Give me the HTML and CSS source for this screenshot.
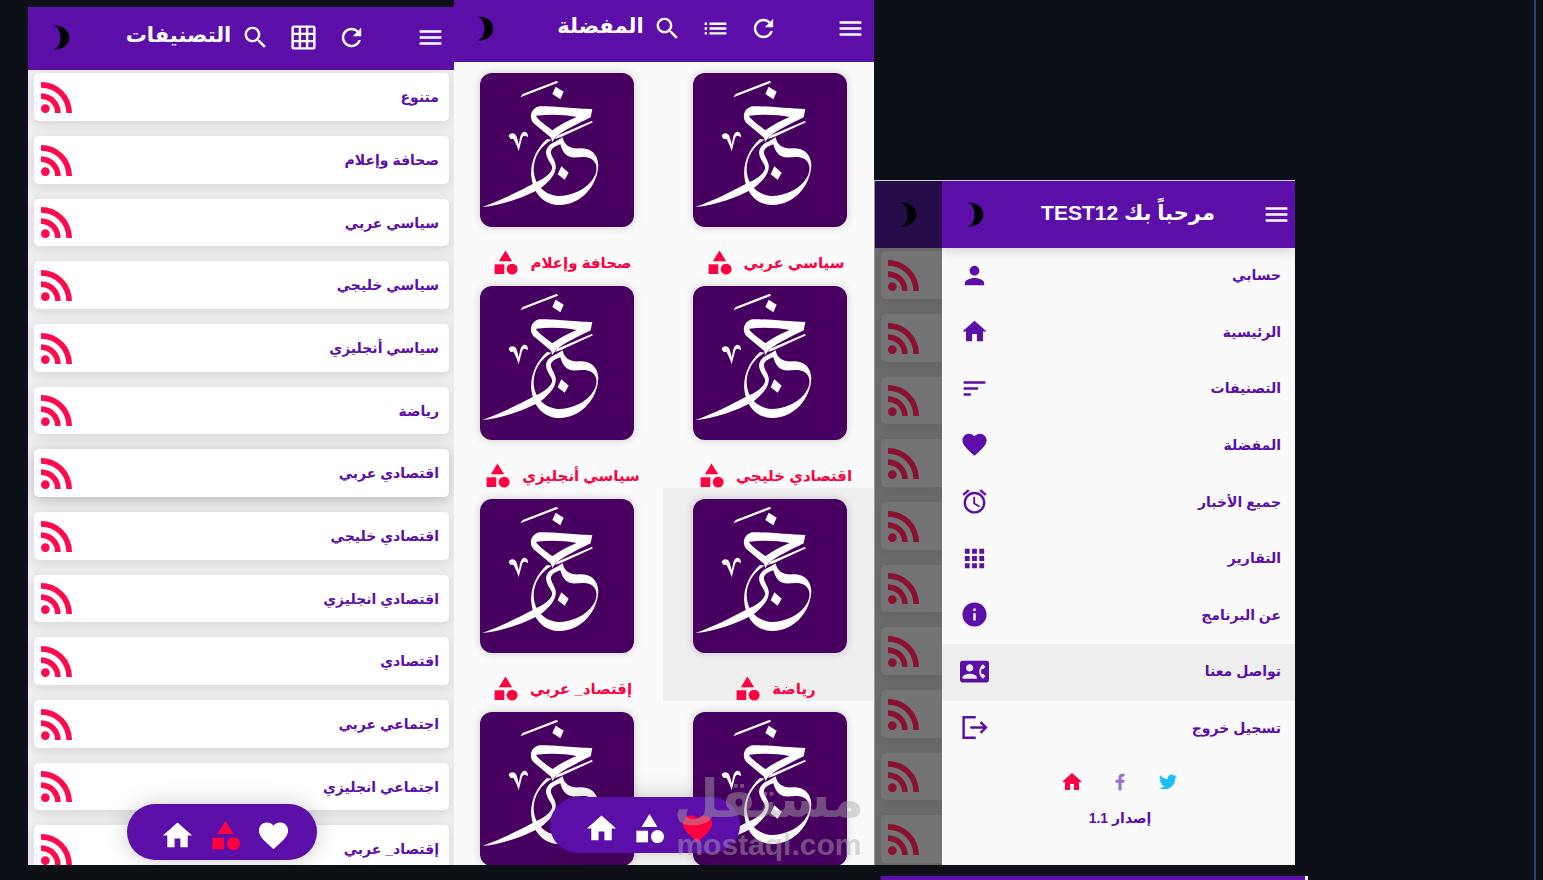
FILE: index.html
```
<!DOCTYPE html>
<html lang="ar" dir="rtl">
<head>
<meta charset="UTF-8">
<meta name="viewport" content="width=device-width, initial-scale=1.0">
<title>خبر</title>
<link rel="stylesheet" href="styles.css">
</head>
<body>

<!-- icons -->
<svg class="sprite" aria-hidden="true">
  <symbol id="i-menu" viewBox="0 0 24 24"><path d="M3 18h18v-2H3v2zm0-5h18v-2H3v2zm0-7v2h18V6H3z"/></symbol>
  <symbol id="i-refresh" viewBox="0 0 24 24"><path d="M17.65 6.35C16.2 4.9 14.21 4 12 4c-4.42 0-7.99 3.58-7.99 8s3.57 8 7.99 8c3.73 0 6.84-2.55 7.73-6h-2.08c-.82 2.33-3.04 4-5.65 4-3.31 0-6-2.69-6-6s2.69-6 6-6c1.66 0 3.14.69 4.22 1.78L13 11h7V4l-2.35 2.35z"/></symbol>
  <symbol id="i-search" viewBox="0 0 24 24"><path d="M15.5 14h-.79l-.28-.27C15.41 12.59 16 11.11 16 9.5 16 5.91 13.09 3 9.5 3S3 5.91 3 9.5 5.91 16 9.5 16c1.61 0 3.09-.59 4.23-1.57l.27.28v.79l5 4.99L20.49 19l-4.99-5zm-6 0C7.01 14 5 11.99 5 9.5S7.01 5 9.5 5 14 7.01 14 9.5 11.99 14 9.5 14z"/></symbol>
  <symbol id="i-grid" viewBox="0 0 24 24"><path d="M20 2H4c-1.1 0-2 .9-2 2v16c0 1.1.9 2 2 2h16c1.1 0 2-.9 2-2V4c0-1.1-.9-2-2-2zM8 20H4v-4h4v4zm0-6H4v-4h4v4zm0-6H4V4h4v4zm6 12h-4v-4h4v4zm0-6h-4v-4h4v4zm0-6h-4V4h4v4zm6 12h-4v-4h4v4zm0-6h-4v-4h4v4zm0-6h-4V4h4v4z"/></symbol>
  <symbol id="i-list" viewBox="0 0 24 24"><path d="M3 13h2v-2H3v2zm0 4h2v-2H3v2zm0-8h2V7H3v2zm4 4h14v-2H7v2zm0 4h14v-2H7v2zM7 7v2h14V7H7z"/></symbol>
  <symbol id="i-moon" viewBox="0 0 24 24"><path d="M4 .5c9-.5 15.500 4.500 15.500 11.500S13 24 4.500 23.500c5-2 6.500-6.500 6.500-11.500S9 2 4 .5z"/></symbol>
  <symbol id="i-rss" viewBox="4 4.440 15.560 15.560"><path d="M6.180 15.640a2.180 2.180 0 1 1 0 4.360 2.180 2.180 0 0 1 0-4.360M4 4.440A15.560 15.560 0 0 1 19.560 20h-2.830A12.730 12.730 0 0 0 4 7.270V4.440m0 5.660a9.900 9.900 0 0 1 9.900 9.900h-2.830A7.070 7.070 0 0 0 4 12.930V10.100z"/></symbol>
  <symbol id="i-category" viewBox="0 0 24 24"><path d="M12 2l-5.500 9h11z"/><circle cx="17.500" cy="17.500" r="4.500"/><path d="M3 13.500h8v8H3z"/></symbol>
  <symbol id="i-heart" viewBox="0 0 24 24"><path d="M12 21.350l-1.450-1.320C5.400 15.360 2 12.280 2 8.500 2 5.420 4.420 3 7.500 3c1.740 0 3.410.81 4.500 2.090C13.090 3.810 14.760 3 16.500 3 19.580 3 22 5.420 22 8.500c0 3.780-3.400 6.860-8.550 11.540L12 21.350z"/></symbol>
  <symbol id="i-home" viewBox="0 0 24 24"><path d="M10 20v-6h4v6h5v-8h3L12 3 2 12h3v8z"/></symbol>
  <symbol id="i-person" viewBox="0 0 24 24"><path d="M12 12c2.210 0 4-1.790 4-4s-1.790-4-4-4-4 1.790-4 4 1.790 4 4 4zm0 2c-2.670 0-8 1.340-8 4v2h16v-2c0-2.660-5.330-4-8-4z"/></symbol>
  <symbol id="i-sort" viewBox="0 0 24 24"><path d="M3 18h6v-2H3v2zM3 6v2h18V6H3zm0 7h12v-2H3v2z"/></symbol>
  <symbol id="i-alarm" viewBox="0 0 24 24"><path d="M22 5.720l-4.600-3.860-1.290 1.530 4.600 3.860L22 5.720zM7.880 3.390L6.600 1.860 2 5.710l1.290 1.530 4.590-3.850zM12.500 8H11v6l4.750 2.850.75-1.230-4-2.370V8zM12 4c-4.970 0-9 4.030-9 9s4.020 9 9 9c4.970 0 9-4.030 9-9s-4.030-9-9-9zm0 16c-3.870 0-7-3.130-7-7s3.130-7 7-7 7 3.130 7 7-3.130 7-7 7z"/></symbol>
  <symbol id="i-apps" viewBox="0 0 24 24"><path d="M4 8h4V4H4v4zm6 12h4v-4h-4v4zm-6 0h4v-4H4v4zm0-6h4v-4H4v4zm6 0h4v-4h-4v4zm6-10v4h4V4h-4zm-6 4h4V4h-4v4zm6 6h4v-4h-4v4zm0 6h4v-4h-4v4z"/></symbol>
  <symbol id="i-info" viewBox="0 0 24 24"><path d="M12 2C6.480 2 2 6.480 2 12s4.480 10 10 10 10-4.480 10-10S17.520 2 12 2zm1 15h-2v-6h2v6zm0-8h-2V7h2v2z"/></symbol>
  <symbol id="i-contact" viewBox="0 0 24 24"><path d="M22 3H2C.9 3 0 3.900 0 5v14c0 1.100.9 2 2 2h20c1.100 0 1.990-.9 1.990-2L24 5c0-1.100-.9-2-2-2zM8 6c1.660 0 3 1.340 3 3s-1.340 3-3 3-3-1.340-3-3 1.340-3 3-3zm6 12H2v-1c0-2 4-3.100 6-3.100s6 1.100 6 3.100v1zm3.850-4h1.640L21 16l-1.990 1.990c-1.310-.98-2.280-2.380-2.730-3.990-.18-.64-.28-1.310-.28-2s.1-1.360.28-2c.45-1.620 1.420-3.010 2.730-3.990L21 8l-1.510 2h-1.640c-.22.63-.35 1.300-.35 2s.13 1.370.35 2z"/></symbol>
  <symbol id="i-logout" viewBox="0 0 24 24"><path d="M13 3.500H3v17h10M8.500 12H21M17 7.500l4.500 4.500-4.500 4.500" fill="none" stroke="currentColor" stroke-width="2"/></symbol>
  <symbol id="i-facebook" viewBox="0 0 24 24"><path d="M10 23V13H6V9h4V6.500C10 3 12 1 15.200 1c1.500 0 2.800.1 2.800.1v3.700h-1.800C14.500 4.800 14 5.800 14 7v2h4l-.6 4H14v10z"/></symbol>
  <symbol id="i-twitter" viewBox="0 0 24 24"><path d="M23.950 4.570a10 10 0 0 1-2.820.77 4.960 4.960 0 0 0 2.160-2.720c-.95.550-2 .95-3.130 1.180a4.920 4.920 0 0 0-8.380 4.480C7.690 8.090 4.070 6.130 1.640 3.160a4.920 4.920 0 0 0 1.520 6.570 4.900 4.900 0 0 1-2.230-.61v.06c0 2.380 1.690 4.370 3.950 4.820a5 5 0 0 1-2.210.08 4.940 4.940 0 0 0 4.600 3.420A9.870 9.870 0 0 1 0 19.540a14 14 0 0 0 7.550 2.210c9.050 0 14-7.500 14-13.980 0-.21 0-.42-.02-.63a9.940 9.940 0 0 0 2.460-2.550z"/></symbol>
  <!-- channel logo -->
  <symbol id="i-logo" viewBox="15 24 462 462">
    <path d="M136 97L143 87 246 47 249 53Z"/>
    <path d="M242 65L266 80 256 103 232 87Z"/>
    <path fill-rule="evenodd" d="M352 132L347 157C308 176 268 196 243 215L232 231 228 218 176 175C162 161 164 132 192 124C210 121 300 130 352 132ZM184 152C178 155 228 194 233 195C255 179 280 166 305 156C270 149 225 147 184 152Z"/>
    <path d="M246 212L350 168 354 172 258 216 240 222Z"/>
    <path d="M216 222C182 252 165 296 169 335C175 385 205 419 253 420C320 420 368 360 370 300C368 265 345 249 315 250C285 252 268 242 263 217L243 229C215 240 210 258 215 273C222 293 234 300 231 312C225 330 200 345 180 353C130 380 80 405 22 426C80 421 150 396 195 371C230 345 245 320 242 300C240 285 225 270 228 258C232 247 245 242 256 238C262 262 275 275 290 277C310 278 330 273 345 280C366 290 370 312 357 337C335 375 290 393 250 393C205 390 175 355 176 310C178 275 195 245 230 224Z"/>
    <path d="M259 304L281 323 269 344 248 328Z"/>
    <path d="M101 213C104 202 118 202 123 211C127 219 129 230 131 238C135 222 135 204 147 200C156 199 161 210 158 217L153 213C146 211 143 214 141 220L131 259C127 244 122 235 117 224C112 217 109 225 105 220Z"/>
  </symbol>
</svg>

<div class="board">
  <main class="screens">

    <!-- categories list -->
    <section class="screen screen-list">
      <header class="bar">
        <button class="icon-btn" aria-label="القائمة"><svg class="icon"><use href="#i-menu"/></svg></button>
        <div class="bar-group">
          <button class="icon-btn" aria-label="تحديث"><svg class="icon"><use href="#i-refresh"/></svg></button>
          <button class="icon-btn" aria-label="شبكة"><svg class="icon"><use href="#i-grid"/></svg></button>
          <button class="icon-btn" aria-label="بحث"><svg class="icon"><use href="#i-search"/></svg></button>
          <h1 class="title">التصنيفات</h1>
        </div>
        <button class="icon-btn moon" aria-label="الوضع الليلي"><svg class="icon"><use href="#i-moon"/></svg></button>
      </header>
      <div class="list">
        <a class="card" href="#">متنوع<svg class="rss"><use href="#i-rss"/></svg></a>
        <a class="card" href="#">صحافة وإعلام<svg class="rss"><use href="#i-rss"/></svg></a>
        <a class="card" href="#">سياسي عربي<svg class="rss"><use href="#i-rss"/></svg></a>
        <a class="card" href="#">سياسي خليجي<svg class="rss"><use href="#i-rss"/></svg></a>
        <a class="card" href="#">سياسي أنجليزي<svg class="rss"><use href="#i-rss"/></svg></a>
        <a class="card" href="#">رياضة<svg class="rss"><use href="#i-rss"/></svg></a>
        <a class="card card-active" href="#">اقتصادي عربي<svg class="rss"><use href="#i-rss"/></svg></a>
        <a class="card" href="#">اقتصادي خليجي<svg class="rss"><use href="#i-rss"/></svg></a>
        <a class="card" href="#">اقتصادي انجليزي<svg class="rss"><use href="#i-rss"/></svg></a>
        <a class="card" href="#">اقتصادي<svg class="rss"><use href="#i-rss"/></svg></a>
        <a class="card" href="#">اجتماعي عربي<svg class="rss"><use href="#i-rss"/></svg></a>
        <a class="card" href="#">اجتماعي انجليزي<svg class="rss"><use href="#i-rss"/></svg></a>
        <a class="card" href="#">إقتصاد_ عربي<svg class="rss"><use href="#i-rss"/></svg></a>
      </div>
      <nav class="pill">
        <a href="#" aria-label="المفضلة"><svg class="icon"><use href="#i-heart"/></svg></a>
        <a class="on" href="#" aria-label="التصنيفات"><svg class="icon"><use href="#i-category"/></svg></a>
        <a href="#" aria-label="الرئيسية"><svg class="icon"><use href="#i-home"/></svg></a>
      </nav>
    </section>

    <!-- favourites grid -->
    <section class="screen screen-grid">
      <header class="bar">
        <button class="icon-btn" aria-label="القائمة"><svg class="icon"><use href="#i-menu"/></svg></button>
        <div class="bar-group">
          <button class="icon-btn" aria-label="تحديث"><svg class="icon"><use href="#i-refresh"/></svg></button>
          <button class="icon-btn" aria-label="قائمة"><svg class="icon"><use href="#i-list"/></svg></button>
          <button class="icon-btn" aria-label="بحث"><svg class="icon"><use href="#i-search"/></svg></button>
          <h1 class="title">المفضلة</h1>
        </div>
        <button class="icon-btn moon" aria-label="الوضع الليلي"><svg class="icon"><use href="#i-moon"/></svg></button>
      </header>
      <div class="tiles">
        <a class="tile" href="#"><svg class="logo"><use href="#i-logo"/></svg><span class="tile-name">سياسي عربي<svg class="icon"><use href="#i-category"/></svg></span></a>
        <a class="tile" href="#"><svg class="logo"><use href="#i-logo"/></svg><span class="tile-name">صحافة وإعلام<svg class="icon"><use href="#i-category"/></svg></span></a>
        <a class="tile" href="#"><svg class="logo"><use href="#i-logo"/></svg><span class="tile-name">اقتصادي خليجي<svg class="icon"><use href="#i-category"/></svg></span></a>
        <a class="tile" href="#"><svg class="logo"><use href="#i-logo"/></svg><span class="tile-name">سياسي أنجليزي<svg class="icon"><use href="#i-category"/></svg></span></a>
        <a class="tile tile-active" href="#"><svg class="logo"><use href="#i-logo"/></svg><span class="tile-name">رياضة<svg class="icon"><use href="#i-category"/></svg></span></a>
        <a class="tile" href="#"><svg class="logo"><use href="#i-logo"/></svg><span class="tile-name">إقتصاد_ عربي<svg class="icon"><use href="#i-category"/></svg></span></a>
        <a class="tile" href="#" aria-label="خبر"><svg class="logo"><use href="#i-logo"/></svg></a>
        <a class="tile" href="#" aria-label="خبر"><svg class="logo"><use href="#i-logo"/></svg></a>
      </div>
      <nav class="pill">
        <a class="on" href="#" aria-label="المفضلة"><svg class="icon"><use href="#i-heart"/></svg></a>
        <a href="#" aria-label="التصنيفات"><svg class="icon"><use href="#i-category"/></svg></a>
        <a href="#" aria-label="الرئيسية"><svg class="icon"><use href="#i-home"/></svg></a>
      </nav>
      <div class="watermark">
        <span class="watermark-ar">مستقل</span>
        <span class="watermark-en">mostaql.com</span>
      </div>
    </section>

    <!-- side menu -->
    <section class="screen screen-menu">
      <div class="drawer">
        <header class="bar">
          <button class="icon-btn" aria-label="القائمة"><svg class="icon"><use href="#i-menu"/></svg></button>
          <h1 class="title">مرحباً بك TEST12</h1>
          <button class="icon-btn moon" aria-label="الوضع الليلي"><svg class="icon"><use href="#i-moon"/></svg></button>
        </header>
        <nav class="menu">
          <a href="#">حسابي<svg class="icon"><use href="#i-person"/></svg></a>
          <a href="#">الرئيسية<svg class="icon"><use href="#i-home"/></svg></a>
          <a href="#">التصنيفات<svg class="icon"><use href="#i-sort"/></svg></a>
          <a href="#">المفضلة<svg class="icon"><use href="#i-heart"/></svg></a>
          <a href="#">جميع الأخبار<svg class="icon"><use href="#i-alarm"/></svg></a>
          <a href="#">التقارير<svg class="icon"><use href="#i-apps"/></svg></a>
          <a href="#">عن البرنامج<svg class="icon"><use href="#i-info"/></svg></a>
          <a class="menu-active" href="#">تواصل معنا<svg class="icon"><use href="#i-contact"/></svg></a>
          <a href="#">تسجيل خروج<svg class="icon"><use href="#i-logout"/></svg></a>
        </nav>
        <footer class="drawer-footer">
          <div class="social">
            <a class="tw" href="#" aria-label="تويتر"><svg><use href="#i-twitter"/></svg></a>
            <a class="fb" href="#" aria-label="فيسبوك"><svg><use href="#i-facebook"/></svg></a>
            <a class="site" href="#" aria-label="الموقع"><svg class="wide"><use href="#i-home"/></svg></a>
          </div>
          <p class="version">إصدار 1.1</p>
        </footer>
      </div>
      <div class="behind" aria-hidden="true">
        <div class="bar"><span class="icon-btn moon"><svg class="icon"><use href="#i-moon"/></svg></span></div>
        <div class="list">
          <div class="card"><svg class="rss"><use href="#i-rss"/></svg></div>
          <div class="card"><svg class="rss"><use href="#i-rss"/></svg></div>
          <div class="card"><svg class="rss"><use href="#i-rss"/></svg></div>
          <div class="card"><svg class="rss"><use href="#i-rss"/></svg></div>
          <div class="card"><svg class="rss"><use href="#i-rss"/></svg></div>
          <div class="card"><svg class="rss"><use href="#i-rss"/></svg></div>
          <div class="card"><svg class="rss"><use href="#i-rss"/></svg></div>
          <div class="card"><svg class="rss"><use href="#i-rss"/></svg></div>
          <div class="card"><svg class="rss"><use href="#i-rss"/></svg></div>
          <div class="card"><svg class="rss"><use href="#i-rss"/></svg></div>
        </div>
      </div>
    </section>

  </main>
  <div class="next-row"><div class="next-screen"></div></div>
</div>

</body>
</html>
```
FILE: styles.css
```
* {
  box-sizing: border-box;
}

body {
  margin: 0;
  background-color: #0d1017;
  color: #5b0fa8;
  font-family: "Liberation Sans", "DejaVu Sans", sans-serif;
  font-weight: bold;
}

a {
  color: inherit;
  text-decoration: none;
}

svg {
  display: block;
  flex: none;
  fill: currentColor;
}

.sprite {
  position: absolute;
  width: 0;
  height: 0;
}

.icon {
  width: 29px;
  height: 29px;
}

/* board */
.board {
  direction: ltr;
  display: flex;
  flex-direction: column;
  height: 100vh;
  margin-right: 7px;
  padding-left: 28px;
  border-right: 2px solid #243f7a;
  overflow: hidden;
}

.screens,
.next-row {
  display: grid;
  grid-template-columns: 426fr 420fr 421fr 239fr;
}

.screens {
  flex: 1;
  min-height: 0;
  grid-template-rows: 100%;
}

.screen {
  direction: rtl;
  position: relative;
  display: flex;
  flex-direction: column;
  overflow: hidden;
  background-color: #fafafa;
}

.screen-list {
  margin-top: 7px;
}

/* next row of screens */
.next-row {
  height: 15px;
  padding-top: 11px;
}

.next-screen {
  grid-column: 3;
  background-color: #5b0fa8;
  border-right: 3px solid #fff;
  margin-left: 7px;
  margin-right: -13px;
}

/* top bar */
.bar {
  flex: none;
  display: flex;
  justify-content: space-between;
  align-items: center;
  height: 63px;
  padding-left: 9px;
  padding-bottom: 3px;
  background-color: #5b0fa8;
  color: #fff;
}

.bar-group {
  display: flex;
  align-items: center;
  padding-left: 10px;
}

.icon-btn {
  display: flex;
  justify-content: center;
  align-items: center;
  width: 48px;
  height: 48px;
  padding: 0;
  border: none;
  background: none;
  color: inherit;
  cursor: pointer;
}

.moon {
  color: #000;
}

.moon .icon {
  width: 25px;
  height: 25px;
}

.title {
  margin: 0;
  padding-bottom: 4px;
  font-size: 21px;
  line-height: 32px;
  white-space: nowrap;
}

/* list */
.list {
  flex: 1;
  min-height: 0;
  display: grid;
  grid-auto-rows: 63px 63px 62px;
  padding: 3px 5px 0 6px;
  background-color: #eee;
}

.card {
  display: flex;
  justify-content: space-between;
  align-items: center;
  margin-bottom: 15px;
  padding: 0 10px 0 7px;
  border-radius: 5px;
  background-color: #fff;
  box-shadow: 0 3px 12px rgba(0, 0, 0, 0.1);
  font-size: 14px;
  line-height: 24px;
}

.card-active {
  box-shadow: 0 3px 14px rgba(0, 0, 0, 0.22);
}

.rss {
  width: 31px;
  height: 31px;
  margin-right: auto;
  color: #ff0a4f;
}

/* floating nav */
.pill {
  position: absolute;
  left: 45.5%;
  bottom: 5px;
  transform: translateX(-50%);
  display: flex;
  align-items: center;
  width: 190px;
  height: 56px;
  padding: 6px 19px 0 27px;
  border-radius: 28px;
  background-color: #5b0fa8;
  box-shadow: 0 0 24px rgba(0, 0, 0, 0.2);
  color: #fff;
}

.pill a {
  display: flex;
  justify-content: center;
  width: 48px;
}

.pill .icon {
  width: 35px;
  height: 35px;
}

.pill .on {
  color: #ff0040;
}

/* grid */
.screen-grid .bar {
  height: 62px;
  padding-left: 7px;
  padding-bottom: 6px;
}

.screen-grid .pill {
  bottom: 12px;
}

.tiles {
  display: grid;
  grid-template-columns: 1fr 1fr;
  grid-auto-rows: 213px;
  margin: 0 -2px 0 -4px;
}

.tile {
  display: flex;
  flex-direction: column;
  align-items: center;
  gap: 21px;
  padding-top: 11px;
  color: #ff0040;
}

.tile-active {
  background-color: #efefef;
}

.logo {
  width: 154px;
  height: 154px;
  border-radius: 12px;
  background-color: #480060;
  box-shadow: 0 0 10px rgba(0, 0, 0, 0.18);
  color: #fff;
}

.tile-name {
  display: flex;
  align-items: center;
  gap: 10px;
  padding-left: 10px;
  font-size: 15px;
  line-height: 26px;
}

.watermark {
  position: absolute;
  right: 10px;
  bottom: 3px;
  display: flex;
  flex-direction: column;
  align-items: center;
  color: #aaa;
  opacity: 0.45;
}

.watermark-ar {
  font-size: 52px;
  line-height: 58px;
}

.watermark-en {
  font-size: 30px;
  line-height: 34px;
}

/* side menu */
.screen-menu {
  flex-direction: row;
  margin-top: 180px;
  border-top: 1px solid #ccc;
  border-left: 1px solid #999;
}

.screen-menu .bar {
  height: 67px;
  padding-bottom: 0;
  padding-left: 9px;
}

.screen-menu .icon-btn:first-child {
  width: 38px;
}

.drawer {
  flex: 353;
  display: flex;
  flex-direction: column;
}

.drawer .bar {
  box-shadow: 0 4px 12px rgba(0, 0, 0, 0.15);
}

.menu {
  flex: 1;
  display: flex;
  flex-direction: column;
}

.menu a {
  flex: 1;
  display: flex;
  justify-content: space-between;
  align-items: center;
  padding: 0 14px 2px 18px;
  font-size: 14px;
  line-height: 24px;
}

.menu .menu-active {
  background-color: #efefef;
}

.drawer-footer {
  height: 108px;
  padding-left: 3px;
  text-align: center;
}

.social {
  display: flex;
  justify-content: center;
  align-items: center;
  gap: 24px;
  padding-top: 13px;
}

.social a {
  display: flex;
  justify-content: center;
  width: 24px;
}

.social svg {
  width: 18px;
  height: 18px;
}

.social .wide {
  width: 24px;
  height: 24px;
}

.tw {
  color: #1dbdf9;
}

.fb {
  color: #9370cc;
}

.site {
  color: #ff0040;
}

.version {
  margin: 12px 0 0;
  font-size: 14px;
  line-height: 24px;
}

/* dimmed screen behind the side menu */
.behind {
  flex: 67;
  display: flex;
  flex-direction: column;
  overflow: hidden;
}

.behind .bar {
  justify-content: flex-end;
  background-color: #260c4a;
}

.behind .moon {
  margin-right: auto;
}

.screen-menu .behind .icon-btn {
  width: 48px;
}

.behind .list {
  padding-right: 0;
  background-color: #6b6b6b;
}

.behind .card {
  border-radius: 5px 0 0 5px;
  background-color: #747474;
  box-shadow: 0 3px 12px rgba(0, 0, 0, 0.08);
}

.behind .rss {
  color: #8a1230;
}
```
